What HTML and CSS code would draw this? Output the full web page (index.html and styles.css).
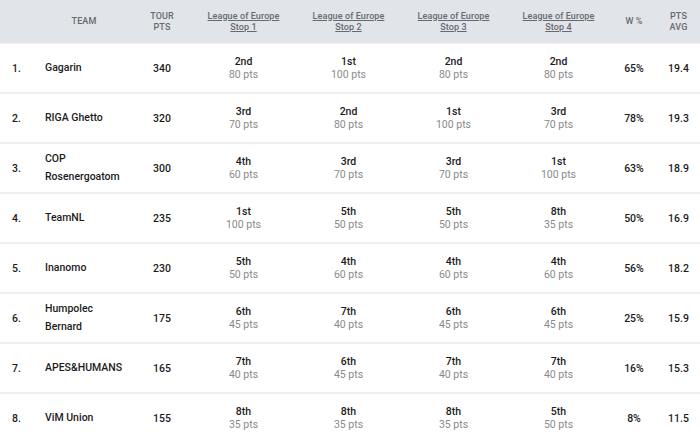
FILE: index.html
```html
<!DOCTYPE html>
<html>
<head>
<meta charset="utf-8">
<link rel="stylesheet" href="styles.css">
</head>
<body>
<div class="table">
  <div class="row head">
    <div class="c rank"></div>
    <div class="c team">TEAM</div>
    <div class="c tour">TOUR<br>PTS</div>
    <div class="c stop"><a>League of Europe<br>Stop 1</a></div>
    <div class="c stop"><a>League of Europe<br>Stop 2</a></div>
    <div class="c stop"><a>League of Europe<br>Stop 3</a></div>
    <div class="c stop"><a>League of Europe<br>Stop 4</a></div>
    <div class="c wp">W %</div>
    <div class="c avg">PTS<br>AVG</div>
  </div>

  <div class="row">
    <div class="c rank">1.</div>
    <div class="c team">Gagarin</div>
    <div class="c tour">340</div>
    <div class="c stop"><b>2nd</b><span>80 pts</span></div>
    <div class="c stop"><b>1st</b><span>100 pts</span></div>
    <div class="c stop"><b>2nd</b><span>80 pts</span></div>
    <div class="c stop"><b>2nd</b><span>80 pts</span></div>
    <div class="c wp">65%</div>
    <div class="c avg">19.4</div>
  </div>

  <div class="row">
    <div class="c rank">2.</div>
    <div class="c team">RIGA Ghetto</div>
    <div class="c tour">320</div>
    <div class="c stop"><b>3rd</b><span>70 pts</span></div>
    <div class="c stop"><b>2nd</b><span>80 pts</span></div>
    <div class="c stop"><b>1st</b><span>100 pts</span></div>
    <div class="c stop"><b>3rd</b><span>70 pts</span></div>
    <div class="c wp">78%</div>
    <div class="c avg">19.3</div>
  </div>

  <div class="row">
    <div class="c rank">3.</div>
    <div class="c team">COP<br>Rosenergoatom</div>
    <div class="c tour">300</div>
    <div class="c stop"><b>4th</b><span>60 pts</span></div>
    <div class="c stop"><b>3rd</b><span>70 pts</span></div>
    <div class="c stop"><b>3rd</b><span>70 pts</span></div>
    <div class="c stop"><b>1st</b><span>100 pts</span></div>
    <div class="c wp">63%</div>
    <div class="c avg">18.9</div>
  </div>

  <div class="row">
    <div class="c rank">4.</div>
    <div class="c team">TeamNL</div>
    <div class="c tour">235</div>
    <div class="c stop"><b>1st</b><span>100 pts</span></div>
    <div class="c stop"><b>5th</b><span>50 pts</span></div>
    <div class="c stop"><b>5th</b><span>50 pts</span></div>
    <div class="c stop"><b>8th</b><span>35 pts</span></div>
    <div class="c wp">50%</div>
    <div class="c avg">16.9</div>
  </div>

  <div class="row">
    <div class="c rank">5.</div>
    <div class="c team">Inanomo</div>
    <div class="c tour">230</div>
    <div class="c stop"><b>5th</b><span>50 pts</span></div>
    <div class="c stop"><b>4th</b><span>60 pts</span></div>
    <div class="c stop"><b>4th</b><span>60 pts</span></div>
    <div class="c stop"><b>4th</b><span>60 pts</span></div>
    <div class="c wp">56%</div>
    <div class="c avg">18.2</div>
  </div>

  <div class="row">
    <div class="c rank">6.</div>
    <div class="c team">Humpolec<br>Bernard</div>
    <div class="c tour">175</div>
    <div class="c stop"><b>6th</b><span>45 pts</span></div>
    <div class="c stop"><b>7th</b><span>40 pts</span></div>
    <div class="c stop"><b>6th</b><span>45 pts</span></div>
    <div class="c stop"><b>6th</b><span>45 pts</span></div>
    <div class="c wp">25%</div>
    <div class="c avg">15.9</div>
  </div>

  <div class="row">
    <div class="c rank">7.</div>
    <div class="c team">APES&amp;HUMANS</div>
    <div class="c tour">165</div>
    <div class="c stop"><b>7th</b><span>40 pts</span></div>
    <div class="c stop"><b>6th</b><span>45 pts</span></div>
    <div class="c stop"><b>7th</b><span>40 pts</span></div>
    <div class="c stop"><b>7th</b><span>40 pts</span></div>
    <div class="c wp">16%</div>
    <div class="c avg">15.3</div>
  </div>

  <div class="row">
    <div class="c rank">8.</div>
    <div class="c team">ViM Union</div>
    <div class="c tour">155</div>
    <div class="c stop"><b>8th</b><span>35 pts</span></div>
    <div class="c stop"><b>8th</b><span>35 pts</span></div>
    <div class="c stop"><b>8th</b><span>35 pts</span></div>
    <div class="c stop"><b>5th</b><span>50 pts</span></div>
    <div class="c wp">8%</div>
    <div class="c avg">11.5</div>
  </div>
</div>
</body>
</html>
```

FILE: styles.css
```css
html, body {
  margin: 0;
  padding: 0;
  background: #fff;
}
body {
  font-family: Roboto, "Liberation Sans", sans-serif;
  color: #1c1c1c;
}
.table {
  width: 700px;
}
.row {
  display: grid;
  grid-template-columns: 45px 78px 68px 105px 105px 105px 105px 46px 43px;
  height: 50px;
  align-items: center;
  border-bottom: 2px solid #efefef;
  box-sizing: border-box;
  font-size: 10.5px;
  font-weight: 500;
}
.row.head {
  height: 44px;
  background: #e1e4e8;
  border-bottom: 1px solid #eef0f2;
  font-size: 9px;
  font-weight: 500;
  color: #666a70;
  line-height: 11px;
  letter-spacing: 0.1px;
}
.c {
  text-align: center;
}
.rank {
  text-align: left;
  padding-left: 12px;
}
.row:not(.head) .team {
  text-align: left;
  line-height: 18px;
}
.tour {
  padding-left: 10px;
}
.head .tour {
  padding-left: 10px;
}
.head a {
  text-decoration: underline;
  color: #666a70;
}
.stop b {
  display: block;
  font-weight: 500;
  line-height: 13px;
  color: #1c1c1c;
}
.stop span {
  display: block;
  font-weight: 400;
  color: #8a8a8a;
  line-height: 14px;
}
```
